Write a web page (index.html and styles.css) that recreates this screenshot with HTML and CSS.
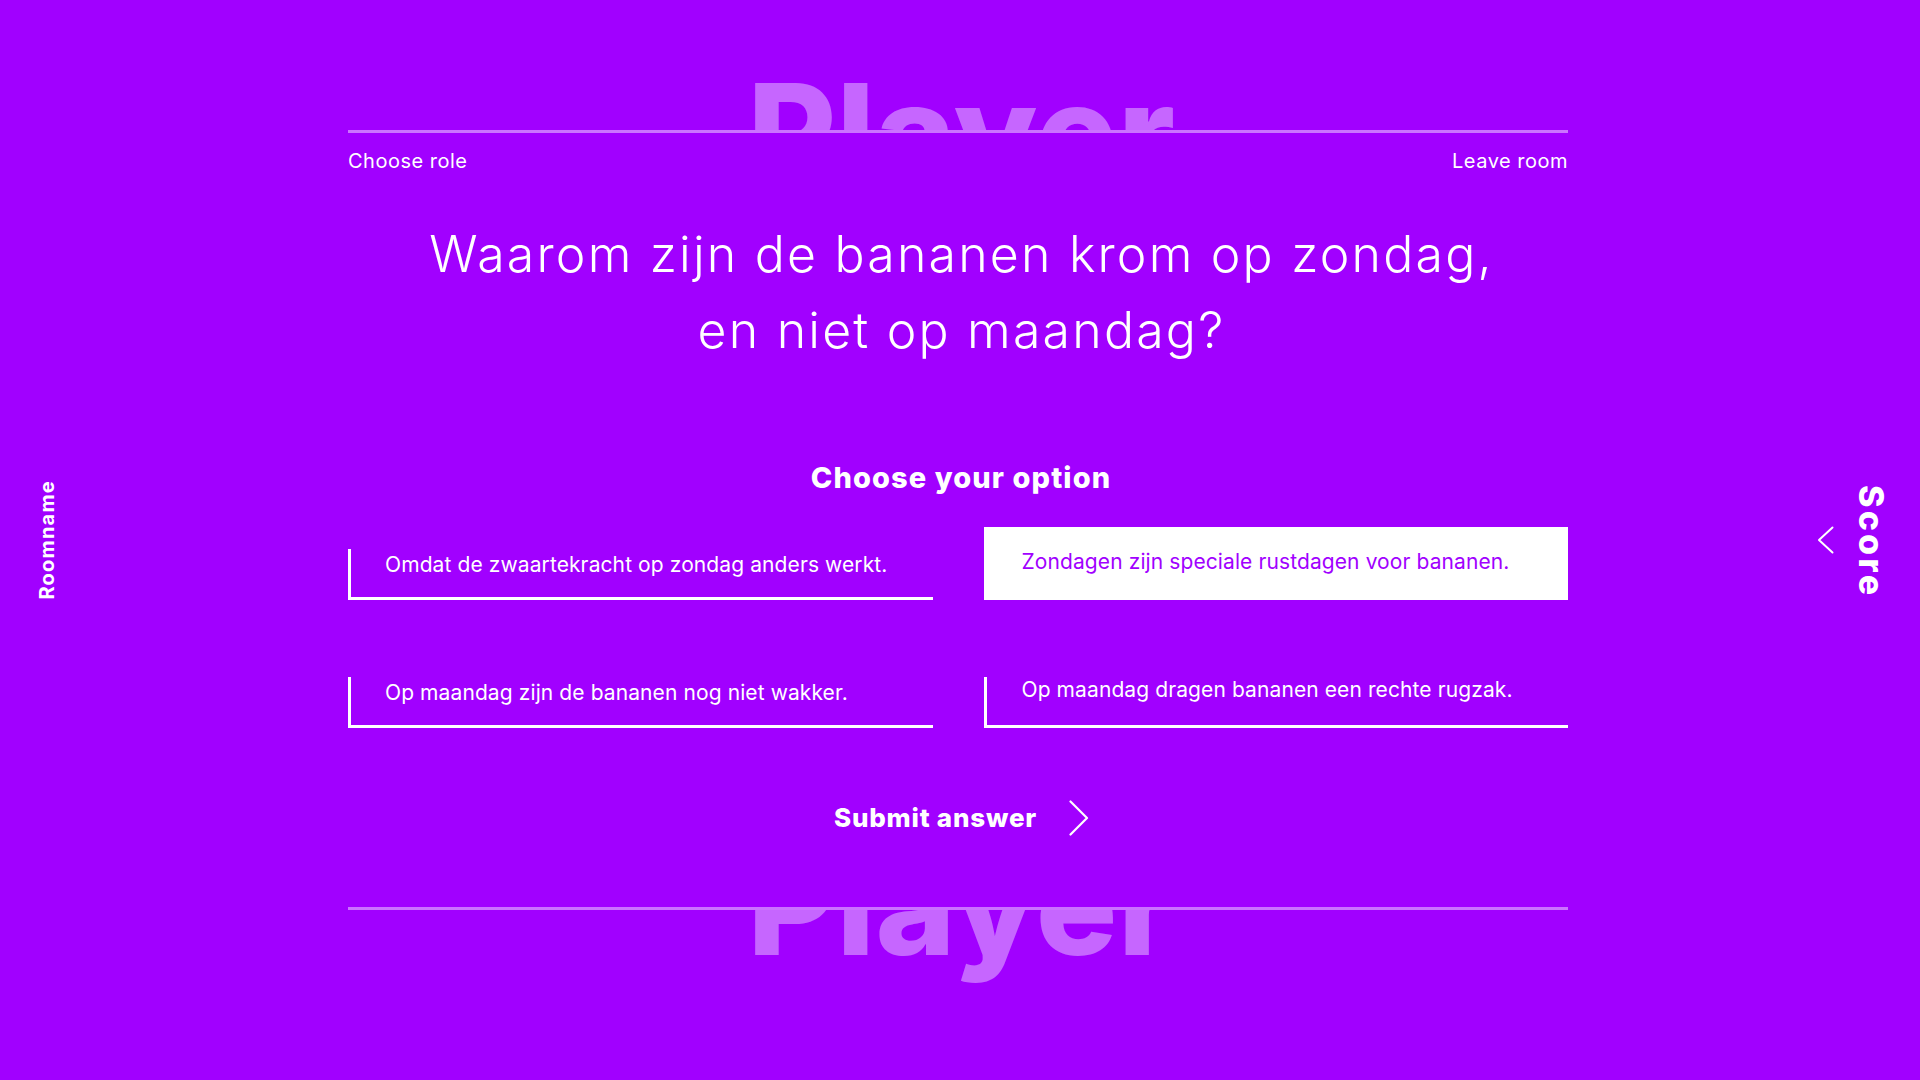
FILE: index.html
```html
<!DOCTYPE html>
<html lang="nl">
<head>
<meta charset="utf-8">
<title>Player</title>
<link rel="stylesheet" href="styles.css">
</head>
<body>
<div class="page">
  <aside class="side side-left">
    <span class="roomname">Roomname</span>
  </aside>

  <main class="main">
    <header class="banner banner-top">
      <span class="banner-title">Player</span>
    </header>

    <nav class="topnav">
      <a class="navlink" href="#">Choose role</a>
      <a class="navlink" href="#">Leave room</a>
    </nav>

    <h1 class="question">Waarom zijn de bananen krom op zondag,<br>en niet op maandag?</h1>

    <h2 class="choose">Choose your option</h2>

    <div class="options">
      <button class="option">Omdat de zwaartekracht op zondag anders werkt.</button>
      <button class="option option-right is-selected">Zondagen zijn speciale rustdagen voor bananen.</button>
      <button class="option">Op maandag zijn de bananen nog niet wakker.</button>
      <button class="option option-right">Op maandag dragen bananen een rechte rugzak.</button>
    </div>

    <button class="submit">
      <span class="submit-label">Submit answer</span>
      <svg class="chev-right" width="20" height="36" viewBox="0 0 20 36" aria-hidden="true">
        <polyline points="1.5,1.5 18,18 1.5,34.5" fill="none" stroke="#fff" stroke-width="2.2" stroke-linecap="round" stroke-linejoin="round"/>
      </svg>
    </button>

    <footer class="banner banner-bottom">
      <span class="banner-title banner-title-bottom">Player</span>
    </footer>
  </main>

  <aside class="side side-right">
    <svg class="chev-left" width="17" height="28" viewBox="0 0 17 28" aria-hidden="true">
      <polyline points="15.5,1.5 2,14 15.5,26.5" fill="none" stroke="#fff" stroke-width="2" stroke-linecap="round" stroke-linejoin="round"/>
    </svg>
    <span class="score">Score</span>
  </aside>
</div>
</body>
</html>
```
FILE: styles.css
```css
* { box-sizing: border-box; }

html, body {
  margin: 0;
  padding: 0;
}

body {
  background: #a100ff;
  color: #fff;
  font-family: "Inter", "Noto Sans", sans-serif;
  overflow: hidden;
}

.page {
  display: grid;
  grid-template-columns: 348px 1220px 352px;
  height: 1080px;
}

/* side labels */
.side {
  display: flex;
  align-items: center;
}

.side-left {
  padding-left: 35px;
}

.roomname {
  writing-mode: vertical-rl;
  transform: rotate(180deg);
  font-size: 20px;
  font-weight: 700;
  letter-spacing: 1.2px;
  line-height: 24px;
}

.side-right {
  justify-content: flex-end;
  padding-right: 29px;
  padding-top: 4px;
  gap: 17px;
}

.chev-left {
  display: block;
  margin-top: -4px;
}

.score {
  writing-mode: vertical-rl;
  font-size: 34px;
  font-weight: 800;
  letter-spacing: 3.2px;
  line-height: 40px;
}

/* main column */
.main {
  display: flex;
  flex-direction: column;
}

.banner {
  overflow: hidden;
  text-align: center;
  padding-left: 7px;
}

.banner-top {
  height: 133px;
  padding-top: 65px;
  border-bottom: 3px solid rgba(255, 255, 255, 0.45);
}

.banner-bottom {
  height: 100px;
  margin-top: 71px;
  border-top: 3px solid rgba(255, 255, 255, 0.45);
}

.banner-title {
  display: block;
  font-size: 136px;
  font-weight: 800;
  line-height: 136px;
  letter-spacing: 0.5px;
  color: rgba(255, 255, 255, 0.4);
}

.banner-title-bottom {
  margin-top: -72px;
}

.topnav {
  display: flex;
  justify-content: space-between;
  margin-top: 13px;
}

.navlink {
  color: #fff;
  text-decoration: none;
  font-size: 20px;
  line-height: 30px;
  letter-spacing: 0.5px;
}

.question {
  margin: 40px 0 0;
  padding-left: 7px;
  text-align: center;
  font-size: 50px;
  font-weight: 300;
  line-height: 76px;
  letter-spacing: 2.2px;
}

.choose {
  margin: 92px 0 0;
  padding-left: 6px;
  text-align: center;
  font-size: 29px;
  font-weight: 800;
  line-height: 35px;
  letter-spacing: 1.1px;
}

.options {
  display: grid;
  grid-template-columns: 1fr 1fr;
  column-gap: 51px;
  row-gap: 55px;
  margin-top: 32px;
}

.option {
  display: flex;
  align-items: center;
  height: 73px;
  padding: 6px 20px 0 37px;
  border: 0;
  border-bottom: 3px solid #fff;
  background: linear-gradient(#fff, #fff) left bottom / 3px 48px no-repeat;
  color: #fff;
  font-family: inherit;
  font-size: 21px;
  font-weight: 400;
  line-height: 30px;
  letter-spacing: 0.1px;
  text-align: left;
  cursor: pointer;
}

.option-right {
  padding-top: 0;
  padding-bottom: 0;
  padding-left: 38px;
}

.option.is-selected {
  background: #fff;
  color: #a100ff;
  border-bottom-color: #fff;
}

.submit {
  display: flex;
  align-items: center;
  justify-content: center;
  gap: 32px;
  margin-top: 72px;
  padding: 0 0 0 7px;
  border: 0;
  background: none;
  color: #fff;
  font-family: inherit;
  cursor: pointer;
}

.submit-label {
  font-size: 26px;
  font-weight: 800;
  line-height: 34px;
  letter-spacing: 0.8px;
}

.chev-right {
  display: block;
}
```
